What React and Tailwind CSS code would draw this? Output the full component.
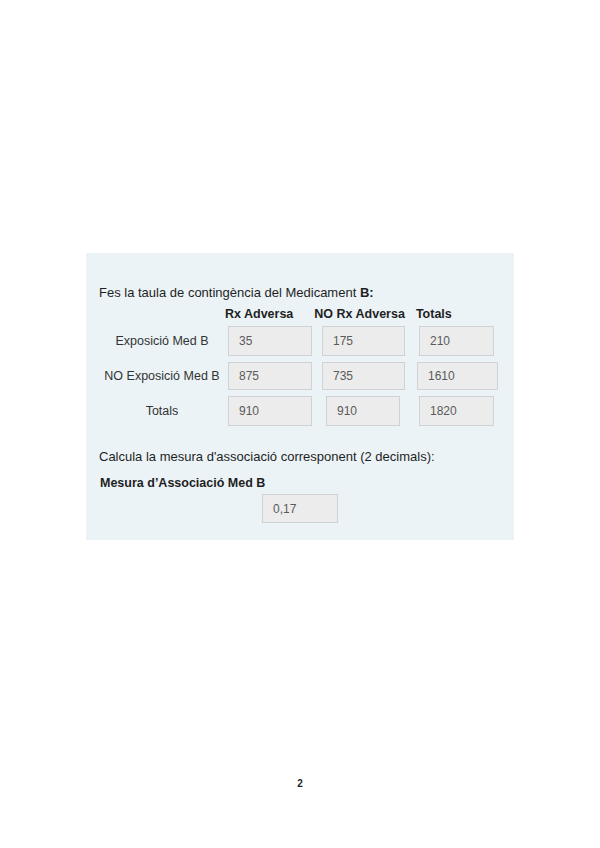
import React from 'react';

const Box = ({ value, className = '' }) => (
  <div className={`flex items-center border border-[#cfd2d4] bg-[#ececec] pl-[10px] text-[12px] text-[#5a5a5a] ${className}`}>
    {value}
  </div>
);

export default function App() {
  return (
    <div className="w-[600px] h-[848px] bg-white flex flex-col text-[#1f1f1f]" style={{ fontFamily: '"Liberation Sans", Arial, sans-serif' }}>
      <div className="h-[253px]" />

      {/* Contingency panel */}
      <div className="ml-[86px] w-[428px] h-[287px] bg-[#ebf3f6] pl-[13px] flex flex-col">
        <div className="h-[32px]" />
        <p className="h-[16px] leading-[16px] text-[13px]">
          Fes la taula de contingència del Medicament <b>B:</b>
        </p>

        {/* Column headers */}
        <div className="flex h-[18px] mt-[4px] items-center text-[12.5px] font-bold">
          <span className="ml-[126px]">Rx Adversa</span>
          <span className="ml-[21px]">NO Rx Adversa</span>
          <span className="ml-[11px]">Totals</span>
        </div>

        {/* Row 1 */}
        <div className="flex items-center mt-[3px]">
          <div className="w-[126px] text-center text-[12.5px] text-[#333]">Exposició Med B</div>
          <Box value="35" className="ml-[3px] w-[84px] h-[30px]" />
          <Box value="175" className="ml-[10px] w-[83px] h-[30px]" />
          <Box value="210" className="ml-[14px] w-[75px] h-[30px]" />
        </div>

        {/* Row 2 */}
        <div className="flex items-center mt-[6px]">
          <div className="w-[126px] text-center text-[12.5px] text-[#333]">NO Exposició Med B</div>
          <Box value="875" className="ml-[3px] w-[84px] h-[28px]" />
          <Box value="735" className="ml-[10px] w-[83px] h-[28px]" />
          <Box value="1610" className="ml-[12px] w-[81px] h-[28px]" />
        </div>

        {/* Row 3 */}
        <div className="flex items-center mt-[6px]">
          <div className="w-[126px] text-center text-[12.5px] text-[#333]">Totals</div>
          <Box value="910" className="ml-[3px] w-[84px] h-[30px]" />
          <Box value="910" className="ml-[14px] w-[74px] h-[30px]" />
          <Box value="1820" className="ml-[19px] w-[75px] h-[30px]" />
        </div>

        <p className="mt-[23px] h-[16px] leading-[16px] text-[13px]">
          Calcula la mesura d'associació corresponent (2 decimals):
        </p>
        <p className="mt-[10px] ml-[1px] h-[16px] leading-[16px] text-[12.5px] font-bold">
          Mesura d’Associació Med B
        </p>
        <Box value="0,17" className="mt-[3px] ml-[163px] w-[76px] h-[29px]" />
      </div>

      <div className="h-[237px]" />
      <div className="text-center text-[10px] font-bold leading-[14px]">2</div>
    </div>
  );
}
